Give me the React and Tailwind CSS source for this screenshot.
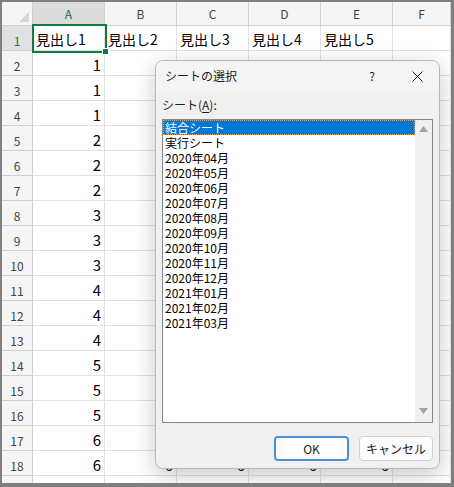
import React from "react";

const colNames = ["A", "B", "C", "D", "E", "F"];
const colW = ["w-[72px]", "w-[72px]", "w-[72px]", "w-[72px]", "w-[72px]", "w-[58px]"];
const heads = ["見出し1", "見出し2", "見出し3", "見出し4", "見出し5", ""];
const vals = [1, 1, 1, 2, 2, 2, 3, 3, 3, 4, 4, 4, 5, 5, 5, 6, 6, 6];
const items = [
  "結合シート",
  "実行シート",
  "2020年04月",
  "2020年05月",
  "2020年06月",
  "2020年07月",
  "2020年08月",
  "2020年09月",
  "2020年10月",
  "2020年11月",
  "2020年12月",
  "2021年01月",
  "2021年02月",
  "2021年03月",
];

function Corner() {
  return (
    <div className="w-[31px] h-[24px] shrink-0 bg-[#f5f5f5] border-r border-b border-[#d0d0d0] relative">
      <svg className="absolute right-[3px] bottom-[3px]" width="10" height="10" viewBox="0 0 10 10">
        <polygon points="10,0 10,10 0,10" fill="#d6d6d6" />
      </svg>
    </div>
  );
}

function Dialog() {
  return (
    <div className="absolute left-[153px] top-[58px] w-[285px] rounded-[8px] border border-[#b9b9b9] bg-[#f0f0f0] shadow-[0_6px_22px_rgba(0,0,0,0.22)] overflow-hidden">
      <div className="h-[30px] flex items-center bg-[#f4f4f4]">
        <span className="pl-[9px] flex-1 text-[12px] leading-none text-[#1b1b1b]">シートの選択</span>
        <span className="w-[20px] text-center text-[12px] leading-none text-[#1b1b1b]">?</span>
        <span className="ml-[25px] mr-[12px] w-[20px] flex justify-center">
          <svg width="11" height="11" viewBox="0 0 11 11">
            <path d="M0.5 0.5 L10.5 10.5 M10.5 0.5 L0.5 10.5" stroke="#222" strokeWidth="1" />
          </svg>
        </span>
      </div>
      <div className="px-[6px] pb-[7px]">
        <div className="mt-[7px] h-[14px] text-[12px] leading-[14px] text-[#1b1b1b]">
          シート(<span className="underline underline-offset-2">A</span>):
        </div>
        <div className="mt-[7px] h-[304px] border border-[#828790] bg-white flex">
          <div className="flex-1 flex flex-col">
            {items.map((it, i) => (
              <div
                key={it}
                className={
                  i === 0
                    ? "h-[15px] shrink-0 overflow-hidden pl-[2px] text-[12px] leading-[15px] bg-[#0078d7] text-white outline outline-1 outline-dotted outline-[#f2a33c] -outline-offset-1"
                    : "h-[15px] shrink-0 overflow-hidden pl-[2px] text-[12px] leading-[15px] text-black"
                }
              >
                {it}
              </div>
            ))}
          </div>
          <div className="w-[17px] bg-[#f0f0f0] flex flex-col items-center justify-between pt-[6px] pb-[8px]">
            <svg width="9" height="6" viewBox="0 0 9 6">
              <polygon points="4.5,0 9,6 0,6" fill="#a3a3a3" />
            </svg>
            <svg width="9" height="6" viewBox="0 0 9 6">
              <polygon points="0,0 9,0 4.5,6" fill="#a3a3a3" />
            </svg>
          </div>
        </div>
        <div className="mt-[13px] flex justify-end gap-[10px]">
          <button className="w-[75px] h-[25px] rounded-[4px] border-2 border-[#4a90dc] bg-white text-[12px] leading-none text-[#1b1b1b]">
            OK
          </button>
          <button className="w-[74px] h-[25px] rounded-[4px] border border-[#d0d0d0] bg-[#fdfdfd] text-[12px] leading-none text-[#1b1b1b]">
            キャンセル
          </button>
        </div>
      </div>
    </div>
  );
}

export default function App() {
  return (
    <div className="w-[454px] h-[487px] overflow-hidden relative bg-white border-[#7f7f7f] border-t-2 border-l-2 border-r-[3px] border-b-4 font-['Noto_Sans_CJK_JP','Noto_Sans',sans-serif]">
      <div className="flex">
        <Corner />
        {colNames.map((c, i) => (
          <div
            key={c}
            className={`${colW[i]} h-[24px] shrink-0 border-r border-b border-[#d0d0d0] flex items-center justify-center text-[12px] leading-none ${
              i === 0 ? "bg-[#dcdcdc] text-[#1d6b3f]" : "bg-[#f5f5f5] text-[#444]"
            }`}
          >
            {c}
          </div>
        ))}
      </div>
      <div className="flex">
        <div className="w-[31px] h-[25px] shrink-0 bg-[#e1e1e1] border-r border-b border-[#d0d0d0] flex items-center justify-center pt-[5px] text-[12px] leading-none text-[#107c41]">
          1
        </div>
        {heads.map((h, i) => (
          <div
            key={i}
            className={`${colW[i]} h-[25px] shrink-0 border-r border-b border-[#e1e1e1] flex items-center pl-[3px] pt-[2px] text-[14px] leading-none text-black`}
          >
            {h}
          </div>
        ))}
      </div>
      {vals.map((v, r) => (
        <div key={r} className="flex">
          <div className="w-[31px] h-[25px] shrink-0 bg-[#f5f5f5] border-r border-b border-[#d0d0d0] flex items-center justify-center pt-[5px] text-[12px] leading-none text-[#444]">
            {r + 2}
          </div>
          {colNames.map((c, i) => (
            <div
              key={c}
              className={`${colW[i]} h-[25px] shrink-0 border-r border-b border-[#e1e1e1] flex items-center justify-end pr-[3px] pt-[2px] text-[15px] leading-none text-black`}
            >
              {i < 5 ? v : ""}
            </div>
          ))}
        </div>
      ))}
      <div className="absolute left-[30px] top-[22px] w-[75px] h-[29px] border-2 border-[#107c41]" />
      <div className="absolute left-[100px] top-[46px] w-[7px] h-[7px] bg-[#107c41] border border-white" />
      <Dialog />
    </div>
  );
}
